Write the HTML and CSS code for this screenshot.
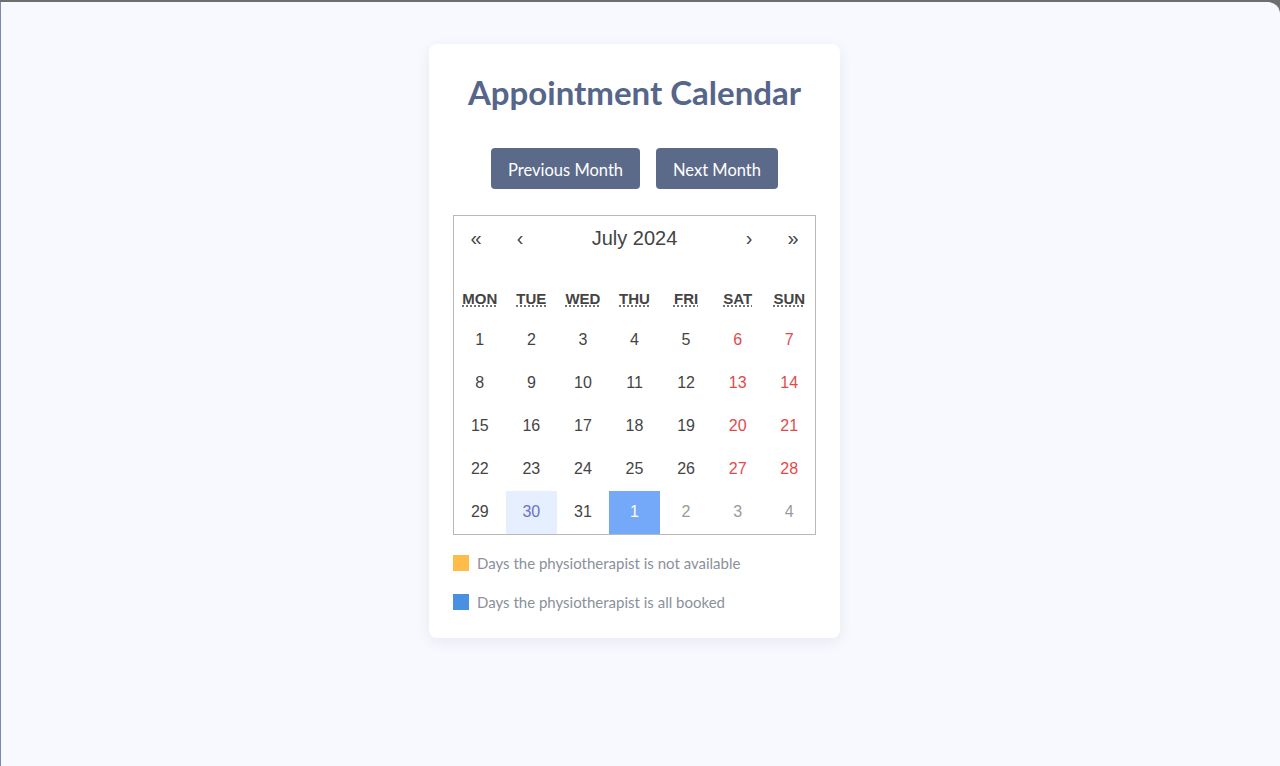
FILE: index.html
```html
<!DOCTYPE html>
<html lang="en">
<head>
<meta charset="utf-8">
<title>Appointment Calendar</title>
<link rel="stylesheet" href="styles.css">
</head>
<body>
<div class="frame">
  <div class="card">
    <h1 class="title">Appointment Calendar</h1>
    <div class="actions">
      <button class="btn">Previous Month</button>
      <button class="btn">Next Month</button>
    </div>
    <div class="calendar">
      <div class="nav">
        <button class="nav-arrow">«</button>
        <button class="nav-arrow">‹</button>
        <span class="nav-label">July 2024</span>
        <button class="nav-arrow">›</button>
        <button class="nav-arrow">»</button>
      </div>
      <div class="weekdays">
        <div class="weekday"><abbr title="Monday">MON</abbr></div>
        <div class="weekday"><abbr title="Tuesday">TUE</abbr></div>
        <div class="weekday"><abbr title="Wednesday">WED</abbr></div>
        <div class="weekday"><abbr title="Thursday">THU</abbr></div>
        <div class="weekday"><abbr title="Friday">FRI</abbr></div>
        <div class="weekday"><abbr title="Saturday">SAT</abbr></div>
        <div class="weekday"><abbr title="Sunday">SUN</abbr></div>
      </div>
      <div class="days">
        <div class="day">1</div><div class="day">2</div><div class="day">3</div><div class="day">4</div><div class="day">5</div><div class="day weekend">6</div><div class="day weekend">7</div>
        <div class="day">8</div><div class="day">9</div><div class="day">10</div><div class="day">11</div><div class="day">12</div><div class="day weekend">13</div><div class="day weekend">14</div>
        <div class="day">15</div><div class="day">16</div><div class="day">17</div><div class="day">18</div><div class="day">19</div><div class="day weekend">20</div><div class="day weekend">21</div>
        <div class="day">22</div><div class="day">23</div><div class="day">24</div><div class="day">25</div><div class="day">26</div><div class="day weekend">27</div><div class="day weekend">28</div>
        <div class="day">29</div><div class="day today">30</div><div class="day">31</div><div class="day active">1</div><div class="day neighbor">2</div><div class="day neighbor">3</div><div class="day neighbor">4</div>
      </div>
    </div>
    <ul class="legend">
      <li class="legend-item"><span class="swatch swatch-unavailable"></span>Days the physiotherapist is not available</li>
      <li class="legend-item"><span class="swatch swatch-booked"></span>Days the physiotherapist is all booked</li>
    </ul>
  </div>
</div>
</body>
</html>
```

FILE: styles.css
```css
html {
  background: #6e6e6e;
}
body {
  margin: 0;
}
.frame {
  margin-top: 2px;
  height: 764px;
  box-sizing: border-box;
  border-left: 1px solid #7e87ad;
  border-top-right-radius: 12px;
  background: #f8f9fe;
  padding: 42px 12px 0 0;
  font-family: Lato, "Open Sans", sans-serif;
}
.card {
  width: 363px;
  margin: 0 auto;
  padding: 24px;
  background: #ffffff;
  border-radius: 8px;
  box-shadow: 0 4px 14px rgba(40, 50, 90, 0.08);
}
.title {
  margin: 4px 0 0;
  font-size: 33px;
  line-height: 40px;
  font-weight: 700;
  color: #56658a;
  text-align: center;
}
.actions {
  display: flex;
  justify-content: center;
  gap: 16px;
  margin-top: 36px;
}
.btn {
  font-family: Lato, "Open Sans", sans-serif;
  font-size: 16.5px;
  line-height: 21px;
  color: #ffffff;
  background: #5c6a8a;
  border: none;
  border-radius: 4px;
  padding: 12px 17px 8px;
}
.calendar {
  margin-top: 26px;
  border: 1px solid #b9b9b1;
  background: #ffffff;
  font-family: "Liberation Sans", Arial, sans-serif;
  color: #444444;
}
.nav {
  display: flex;
  height: 44px;
  margin-bottom: 16px;
}
.nav-arrow {
  min-width: 44px;
  background: none;
  border: none;
  font-family: "Liberation Sans", Arial, sans-serif;
  font-size: 20px;
  color: #444444;
  padding: 0;
}
.nav-label {
  flex: 1;
  display: flex;
  align-items: center;
  justify-content: center;
  font-size: 20px;
  color: #444444;
}
.weekdays {
  display: grid;
  grid-template-columns: repeat(7, 1fr);
  height: 43px;
  padding-top: 2px;
  box-sizing: border-box;
}
.weekday {
  display: flex;
  align-items: center;
  justify-content: center;
  font-size: 15px;
  font-weight: 700;
  color: #444444;
}
.weekday abbr {
  text-decoration: underline dotted;
  text-underline-offset: 2px;
}
.days {
  display: grid;
  grid-template-columns: repeat(7, 1fr);
  grid-auto-rows: 43px;
}
.day {
  display: flex;
  align-items: center;
  justify-content: center;
  padding-bottom: 2px;
  font-size: 16px;
  color: #444444;
}
.weekend {
  color: #e24a4a;
}
.neighbor {
  color: #9a9a9a;
}
.today {
  background: #e6efff;
  color: #6a73c9;
}
.active {
  background: #74a8f8;
  color: #ffffff;
}
.legend {
  list-style: none;
  margin: 16px 0 0;
  padding: 0;
  display: flex;
  flex-direction: column;
  gap: 15px;
}
.legend-item {
  display: flex;
  align-items: center;
  gap: 8px;
  height: 24px;
  font-size: 15px;
  color: #8b909b;
}
.swatch {
  width: 16px;
  height: 16px;
  flex: none;
}
.swatch-unavailable {
  background: #fdbd48;
}
.swatch-booked {
  background: #4a90e2;
}
```
